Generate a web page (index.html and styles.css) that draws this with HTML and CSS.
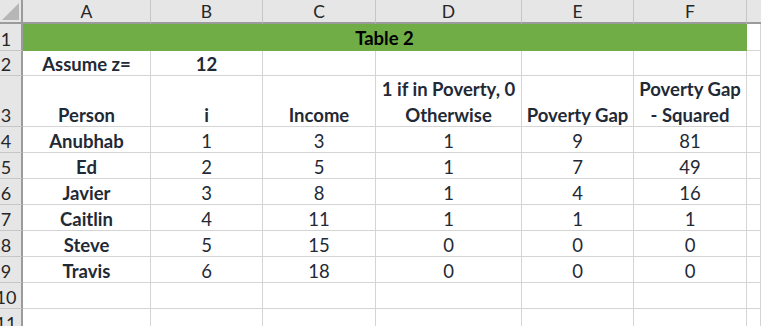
FILE: index.html
```html
<!DOCTYPE html>
<html>
<head>
<meta charset="utf-8">
<link rel="stylesheet" href="styles.css">
</head>
<body>
<div class="sheet">
  <div class="corner"><span class="tri"></span></div>
  <div class="ch">A</div><div class="ch">B</div><div class="ch">C</div><div class="ch">D</div><div class="ch">E</div><div class="ch">F</div><div class="ch last"></div>

  <div class="rh">1</div>
  <div class="c title">Table 2</div>
  <div class="c"></div>

  <div class="rh">2</div>
  <div class="c b">Assume z=</div><div class="c b">12</div><div class="c"></div><div class="c"></div><div class="c"></div><div class="c"></div><div class="c"></div>

  <div class="rh">3</div>
  <div class="c b">Person</div><div class="c b">i</div><div class="c b">Income</div><div class="c b wrap"><span>1 if in Poverty, 0</span><span>Otherwise</span></div><div class="c b">Poverty Gap</div><div class="c b wrap"><span>Poverty Gap</span><span>- Squared</span></div><div class="c"></div>

  <div class="rh">4</div>
  <div class="c b">Anubhab</div><div class="c">1</div><div class="c">3</div><div class="c">1</div><div class="c">9</div><div class="c">81</div><div class="c"></div>

  <div class="rh">5</div>
  <div class="c b">Ed</div><div class="c">2</div><div class="c">5</div><div class="c">1</div><div class="c">7</div><div class="c">49</div><div class="c"></div>

  <div class="rh">6</div>
  <div class="c b">Javier</div><div class="c">3</div><div class="c">8</div><div class="c">1</div><div class="c">4</div><div class="c">16</div><div class="c"></div>

  <div class="rh">7</div>
  <div class="c b">Caitlin</div><div class="c">4</div><div class="c">11</div><div class="c">1</div><div class="c">1</div><div class="c">1</div><div class="c"></div>

  <div class="rh">8</div>
  <div class="c b">Steve</div><div class="c">5</div><div class="c">15</div><div class="c">0</div><div class="c">0</div><div class="c">0</div><div class="c"></div>

  <div class="rh">9</div>
  <div class="c b">Travis</div><div class="c">6</div><div class="c">18</div><div class="c">0</div><div class="c">0</div><div class="c">0</div><div class="c"></div>

  <div class="rh">10</div>
  <div class="c"></div><div class="c"></div><div class="c"></div><div class="c"></div><div class="c"></div><div class="c"></div><div class="c"></div>

  <div class="rh">11</div>
  <div class="c"></div><div class="c"></div><div class="c"></div><div class="c"></div><div class="c"></div><div class="c"></div><div class="c"></div>
</div>
</body>
</html>
```

FILE: styles.css
```css
html, body {
  margin: 0;
  padding: 0;
  background: #ffffff;
  overflow: hidden;
}

.sheet {
  display: grid;
  grid-template-columns: 23px 128px 112px 113px 146px 112px 113px 14px;
  grid-template-rows: 24px 27px 25px 51px repeat(8, 26px);
  width: 761px;
  height: 326px;
  overflow: hidden;
  font-family: Lato, "Liberation Sans", sans-serif;
  font-size: 18.5px;
  color: #1f2a36;
}

.corner {
  background: #e6e6e6;
  border-right: 2px solid #9b9b9b;
  border-bottom: 2px solid #9b9b9b;
  box-sizing: border-box;
  position: relative;
}

.tri {
  position: absolute;
  right: 2px;
  bottom: 2px;
  width: 0;
  height: 0;
  border-left: 17px solid transparent;
  border-bottom: 17px solid #b6b6b6;
}

.ch {
  background: #e6e6e6;
  border-right: 1px solid #c6c6c6;
  border-bottom: 2px solid #9b9b9b;
  box-sizing: border-box;
  display: flex;
  align-items: center;
  justify-content: center;
  color: #262626;
  font-size: 17.5px;
  padding-top: 1px;
}

.ch.last {
  border-right: none;
}

.rh {
  background: #e6e6e6;
  border-right: 2px solid #9b9b9b;
  border-bottom: 1px solid #c6c6c6;
  box-sizing: border-box;
  display: flex;
  align-items: flex-end;
  justify-content: center;
  padding-bottom: 1px;
  padding-right: 9px;
  color: #262626;
  font-size: 18px;
  line-height: 20px;
  white-space: nowrap;
  overflow: visible;
}

.c {
  border-right: 1px solid #d4d4d4;
  border-bottom: 1px solid #d4d4d4;
  box-sizing: border-box;
  display: flex;
  align-items: flex-end;
  justify-content: center;
  padding-bottom: 1px;
  line-height: 20px;
  white-space: nowrap;
  text-align: center;
}

.b {
  font-weight: 700;
}

.wrap {
  flex-direction: column;
  align-items: center;
  justify-content: flex-end;
  gap: 6px;
}

.title {
  grid-column: span 6;
  background: #70ad47;
  border-right: 1px solid #70ad47;
  border-bottom: 1px solid #70ad47;
  color: #000000;
  font-weight: 700;
  align-items: center;
  padding-bottom: 0;
  padding-top: 2px;
}
```
